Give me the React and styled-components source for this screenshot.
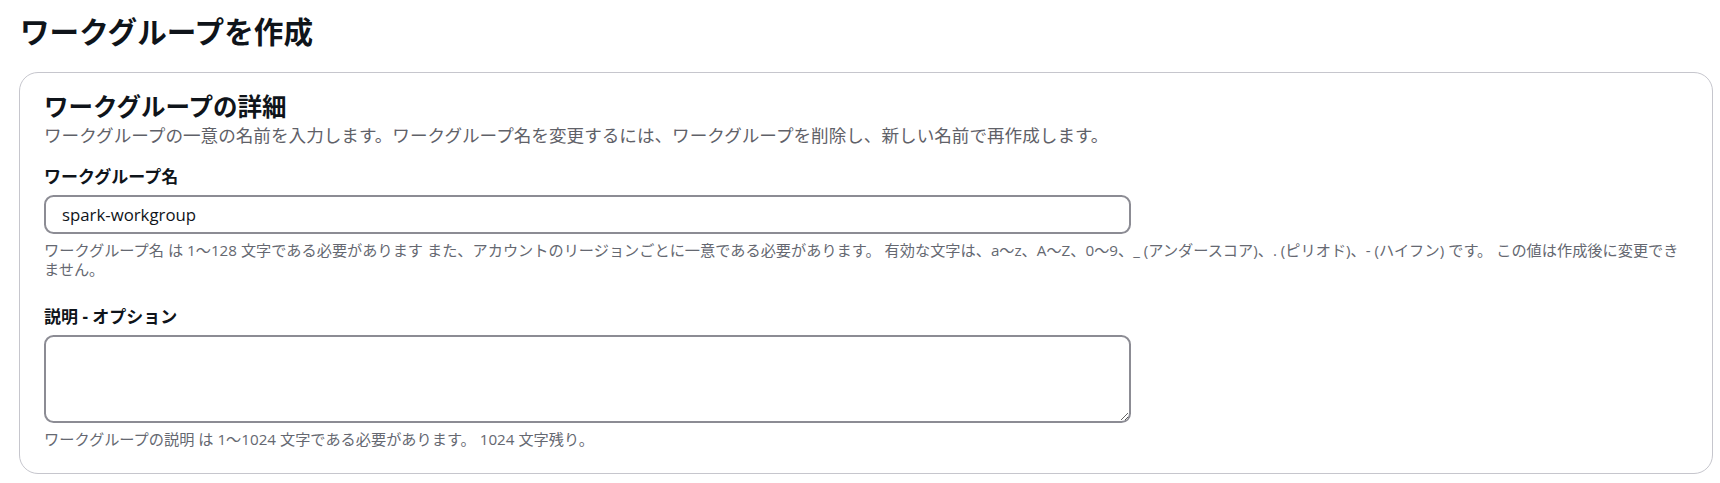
import React from "react";
import styled, { createGlobalStyle } from "styled-components";

const GlobalStyle = createGlobalStyle`
  body {
    margin: 0;
    background: #ffffff;
    font-family: "Open Sans", "Noto Sans CJK JP", sans-serif;
    color: #0f141a;
  }
`;

const Page = styled.div`
  padding: 14px 7px 9px 19px;
`;

const PageTitle = styled.h1`
  margin: 0 0 22px 1px;
  font-size: 29.6px;
  line-height: 36px;
  font-weight: 700;
`;

const Card = styled.section`
  border: 1px solid #c6c6cd;
  border-radius: 19px;
  padding: 20px 24px 24px 24px;
  background: #ffffff;
`;

const CardHeading = styled.h2`
  margin: 0;
  font-size: 24.5px;
  line-height: 28px;
  font-weight: 700;
`;

const CardDescription = styled.p`
  margin: 2px 0 0 0;
  font-size: 17.6px;
  line-height: 24px;
  color: #5f6168;
`;

const Field = styled.div`
  margin-top: ${(p) => p.$top}px;
`;

const Label = styled.label`
  display: block;
  font-size: 17px;
  line-height: 24px;
  font-weight: 700;
  margin-bottom: ${(p) => p.$gap}px;
`;

const TextInput = styled.input`
  box-sizing: border-box;
  display: block;
  width: 1087px;
  height: 39px;
  padding: 0 16px;
  border: 2px solid #8c8c94;
  border-radius: 9.6px;
  font-family: inherit;
  font-size: 16.8px;
  color: #0f141a;
  outline: none;
`;

const TextArea = styled.textarea`
  box-sizing: border-box;
  display: block;
  width: 1087px;
  height: 88px;
  padding: 6px 16px;
  border: 2px solid #8c8c94;
  border-radius: 9.6px;
  font-family: inherit;
  font-size: 16.8px;
  outline: none;
`;

const Hint = styled.p`
  margin: 7px 0 0 0;
  font-size: 15.2px;
  line-height: 19px;
  color: #656871;
`;

export default function App() {
  return (
    <>
      <GlobalStyle />
      <Page>
        <PageTitle>ワークグループを作成</PageTitle>
        <Card>
          <CardHeading>ワークグループの詳細</CardHeading>
          <CardDescription>
            ワークグループの一意の名前を入力します。ワークグループ名を変更するには、ワークグループを削除し、新しい名前で再作成します。
          </CardDescription>

          <Field $top={18}>
            <Label htmlFor="wg-name" $gap={6}>ワークグループ名</Label>
            <TextInput id="wg-name" defaultValue="spark-workgroup" />
            <Hint>
              ワークグループ名 は 1～128 文字である必要があります また、アカウントのリージョンごとに一意である必要があります。 有効な文字は、a～z、A～Z、0～9、_ (アンダースコア)、. (ピリオド)、- (ハイフン) です。 この値は作成後に変更できません。
            </Hint>
          </Field>

          <Field $top={26}>
            <Label htmlFor="wg-desc" $gap={6}>説明 - オプション</Label>
            <TextArea id="wg-desc" />
            <Hint>ワークグループの説明 は 1～1024 文字である必要があります。 1024 文字残り。</Hint>
          </Field>
        </Card>
      </Page>
    </>
  );
}
